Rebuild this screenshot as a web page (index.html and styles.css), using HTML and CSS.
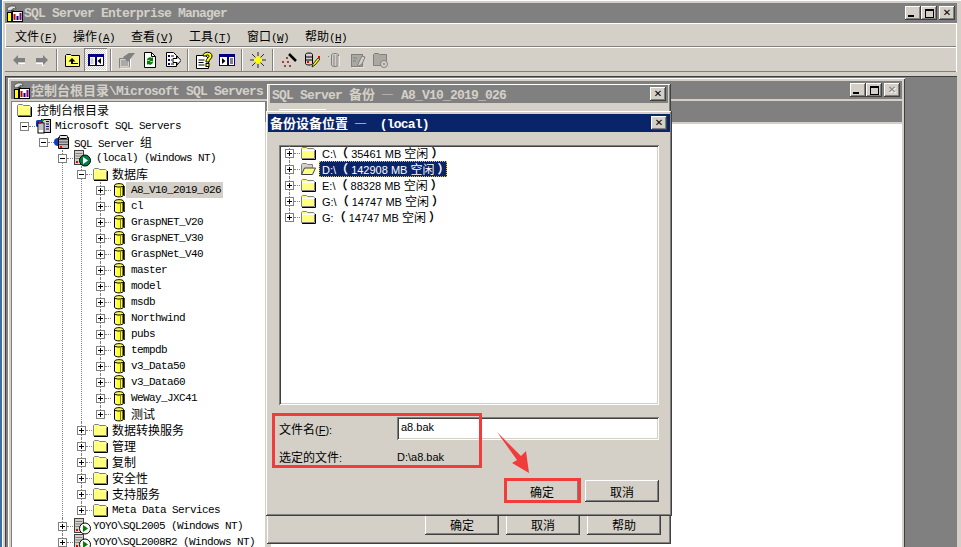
FILE: index.html
```html
<!DOCTYPE html>
<html lang="zh-CN">
<head>
<meta charset="utf-8">
<title>SQL Server Enterprise Manager</title>
<link rel="stylesheet" href="styles.css">
</head>
<body>
<svg class="defs" aria-hidden="true">
  <defs>
    <symbol id="folder" viewBox="0 0 16 16"><path d="M1.500 13.500V3.500l1-1h4l1 1h6l1 1v9z" fill="#ffff80" stroke="#808080"/><path d="M2 5.500h12.500" stroke="#fff"/><path d="M2 14.500h13.500V5" fill="none" stroke="#000"/></symbol>
    <symbol id="folderopen" viewBox="0 0 16 16"><path d="M1.500 13.500V3.500l1-1h4l1 1h5v3" fill="#d4d0c8" stroke="#808080"/><path d="M1.500 13.500l3-6.500h11l-3 6.500z" fill="#ffff80" stroke="#404040"/></symbol>
    <symbol id="db" viewBox="0 0 16 16"><path d="M3.500 3.500c0-2.500 9-2.500 9 0v9.500c0 2.500-9 2.500-9 0z" fill="#ffff33" stroke="#000"/><path d="M5 5.500v8" stroke="#ffffc0"/><path d="M9.500 5.500v9M11.500 5v9" stroke="#808000"/><path d="M3.500 3.500c0 2 9 2 9 0" fill="none" stroke="#000"/><path d="M13.500 4v10" stroke="#404040"/></symbol>
    <symbol id="servers" viewBox="0 0 16 16"><rect x="6.500" y="1.500" width="9" height="13" fill="#d4d0c8" stroke="#000"/><rect x="1" y="2" width="7" height="7" rx="1.500" fill="#0a3fc0"/><rect x="3" y="5" width="6" height="10" fill="#fff" stroke="#000"/><path d="M4 7h4M4 9h4M4 11h4" stroke="#808080"/><rect x="4" y="4" width="2" height="2" fill="#f00"/><rect x="7" y="1" width="2" height="2" fill="#0a0"/><path d="M11 3.500h3M11 6h3M11 8.500h3M11 11h3" stroke="#000080"/></symbol>
    <symbol id="group" viewBox="0 0 16 16"><circle cx="4" cy="8" r="4" fill="#0a3fc0"/><path d="M4.500 3.500h10v11h-10z" fill="#b8b8b8" stroke="#000"/><path d="M5 5.500h9M5 8h9M5 10.500h9" stroke="#505050"/><rect x="5.500" y="1.500" width="8" height="3" rx="1" fill="#e8e8e8" stroke="#000"/><rect x="6" y="12" width="2" height="2" fill="#f00"/></symbol>
    <symbol id="server" viewBox="0 0 18 18"><rect x="1.500" y="1.500" width="9" height="14" fill="#d4d0c8" stroke="#404040"/><path d="M2.500 4.500h7M2.500 7h7M2.500 9.500h7" stroke="#808080"/><rect x="3" y="12" width="2" height="2" fill="#e00"/><circle cx="12" cy="11.500" r="5.500" fill="#008040" stroke="#000"/><path d="M10 8v7l5-3.500z" fill="#fff"/></symbol>
    <symbol id="serverwhite" viewBox="0 0 18 18"><rect x="1.500" y="1.500" width="9" height="14" fill="#d4d0c8" stroke="#404040"/><path d="M2.500 4.500h7M2.500 7h7M2.500 9.500h7" stroke="#808080"/><rect x="3" y="12" width="2" height="2" fill="#e00"/><circle cx="12" cy="11.500" r="5.500" fill="#fff" stroke="#000"/><path d="M10 8v7l5-3.500z" fill="#008000"/></symbol>
    <symbol id="app" viewBox="0 0 17 17"><path d="M1 3l4-2h4l1 3-3-.5L6 5 2 6z" fill="#e0e0e0" stroke="#404040" stroke-width=".7"/><path d="M5 5h3v3H5z" fill="#404040"/><rect x="1.500" y="7.500" width="4" height="9" fill="#ffff00" stroke="#000"/><rect x="6.500" y="6.500" width="10" height="10" fill="#fff" stroke="#000"/><path d="M8.500 15V9" stroke="#c00" stroke-width="2"/><path d="M11.500 15v-4" stroke="#000080" stroke-width="2"/><path d="M14.500 15v-7" stroke="#800080" stroke-width="2"/></symbol>
    <symbol id="arrowl" viewBox="0 0 16 16"><path d="M2 8l5-5v3h7v4H7v3z" fill="#808080"/><path d="M7 13h1v-2h6v1H8v2z" fill="#fff"/></symbol>
    <symbol id="arrowr" viewBox="0 0 16 16"><path d="M14 8L9 3v3H2v4h7v3z" fill="#808080"/><path d="M2 11h7v2l1 1-2 0v-2H2z" fill="#fff"/></symbol>
    <symbol id="up" viewBox="0 0 16 16"><path d="M.5 14.500V3.500l1-1h4l1 1h8v11z" fill="#ffff66" stroke="#000"/><path d="M7 6L3.500 9.500H6V12h7v-1H8V9.500h2.500z" fill="#000"/></symbol>
    <symbol id="panel" viewBox="0 0 16 16"><rect x=".5" y="2.500" width="15" height="11" fill="#fff" stroke="#000080"/><rect x="1" y="3" width="14" height="2" fill="#000080"/><path d="M7.500 3v10M8.500 3v10" stroke="#000080"/><path d="M1.500 13V5" stroke="#000080"/><path d="M13 6v6L9.500 9z" fill="#000"/><path d="M2.500 7h3M2.500 9h3M2.500 11h3" stroke="#a0a0a0"/></symbol>
    <symbol id="panel2" viewBox="0 0 16 16"><rect x=".5" y="2.500" width="15" height="11" fill="#fff" stroke="#000080"/><rect x="1" y="3" width="14" height="2" fill="#000080"/><path d="M8.500 3v10M9.500 3v10" stroke="#000080"/><path d="M3 6v6l3.500-3z" fill="#000"/><path d="M11 7h3M11 9h3M11 11h3" stroke="#000"/></symbol>
    <symbol id="propsoff" viewBox="0 0 18 18"><path d="M1.500 7.500h10v9h-10z" fill="#d4d0c8" stroke="#808080"/><path d="M3 10h7M3 12h7M3 14h7" stroke="#808080"/><path d="M5 6l6-4h6l-4 5-3 4-2-2z" fill="#808080"/><path d="M12.500 8v8M2 17h11" stroke="#fff"/></symbol>
    <symbol id="refresh" viewBox="0 0 16 16"><path d="M2.500 .5h7l4 4v11h-11z" fill="#fff" stroke="#000"/><path d="M9.500 .5v4h4" fill="none" stroke="#000"/><path d="M5 8a3 3 0 015-2l1-1v4H7l1-1a1.500 1.500 0 00-2 1zM11 10a3 3 0 01-5 2l-1 1V9h4l-1 1a1.500 1.500 0 002-1z" fill="#008000"/></symbol>
    <symbol id="export" viewBox="0 0 16 16"><path d="M1.500 .5h7l3 3v11h-10z" fill="#fff" stroke="#000"/><path d="M3 3h2v2H3zM3 7h2v2H3zM3 11h2v2H3z" fill="#000080"/><path d="M6 4h3M6 8h1M6 12h3" stroke="#000"/><path d="M8 6.500h4V4l4 4.500L12 13v-2.500H8z" fill="#fff" stroke="#000"/></symbol>
    <symbol id="help" viewBox="0 0 18 18"><path d="M1.500 4.500h9l3 3v10h-12z" fill="#fff" stroke="#000"/><path d="M3.500 9h6M3.500 11.500h5M3.500 14h6" stroke="#000"/><path d="M8 5c0-5 9-5 9 0 0 3-3 3-3 6h-3c0-4 3-4 3-6 0-1.500-3-1.500-3 0z" fill="#ffff00" stroke="#000"/><rect x="11" y="12.500" width="3" height="3" fill="#ffff00" stroke="#000"/></symbol>
    <symbol id="star" viewBox="0 0 16 16"><path d="M8 0v16M0 8h16M2 2l12 12M14 2L2 14" stroke="#000" stroke-width=".8"/><path d="M8 4v8M4 8h8M5.500 5.500l5 5M10.500 5.500l-5 5" stroke="#ffff00" stroke-width="1.800"/></symbol>
    <symbol id="wand" viewBox="0 0 16 16"><path d="M8 2l7 7" stroke="#000" stroke-width="2.500"/><path d="M5 5h2v2H5zM1 9h2v2H1zM6 9h2v2H6zM3 13h2v2H3zM8 13h2v2H8z" fill="#a04040"/></symbol>
    <symbol id="dbpen" viewBox="0 0 16 16"><path d="M1.500 2.500c0-2 7-2 7 0v9c0 2-7 2-7 0z" fill="#d4d0c8" stroke="#000"/><path d="M2 5h6M2 8h6" stroke="#000"/><rect x="3" y="9" width="2" height="2" fill="#f00"/><path d="M8 15l1-3 5-6 2 1-5 6z" fill="#ffff00" stroke="#000" stroke-width=".8"/><path d="M14 4h2v2h-2z" fill="#f00"/></symbol>
    <symbol id="off1" viewBox="0 0 16 16"><path d="M4.500 3c0-2 7-2 7 0v10c0 2-7 2-7 0z" fill="#d4d0c8" stroke="#808080"/><path d="M7 3v11M10 3v11" stroke="#808080"/><path d="M12 4v10" stroke="#fff"/><rect x="1" y="4" width="1" height="1" fill="#808080"/></symbol>
    <symbol id="off2" viewBox="0 0 16 16"><rect x="1.500" y="2.500" width="11" height="12" fill="#aaa8a0" stroke="#808080"/><path d="M7 15l2-5 3-6 3 1-3 7z" fill="#d4d0c8" stroke="#808080"/><path d="M3 6h4M3 9h3" stroke="#808080"/><path d="M2 16h12" stroke="#fff"/></symbol>
    <symbol id="off3" viewBox="0 0 16 16"><path d="M.5 13.500V2.500l1-1h4l1 1h7v11z" fill="#aaa8a0" stroke="#808080"/><circle cx="11" cy="12" r="3.500" fill="#d4d0c8" stroke="#808080"/><circle cx="11" cy="12" r="1" fill="#808080"/></symbol>
    <symbol id="plus" viewBox="0 0 9 9"><rect x=".5" y=".5" width="8" height="8" fill="#fff" stroke="#808080"/><path d="M2 4.500h5M4.500 2v5" stroke="#000"/></symbol>
    <symbol id="minus" viewBox="0 0 9 9"><rect x=".5" y=".5" width="8" height="8" fill="#fff" stroke="#808080"/><path d="M2 4.500h5" stroke="#000"/></symbol>
  </defs>
</svg>

<div class="app">
  <header class="titlebar">
    <svg class="ic-app"><use href="#app"/></svg>
    <span class="title-text">SQL Server Enterprise Manager</span>
    <span class="caps">
      <button class="cap"><span class="g-min"></span></button><button class="cap cap-max"><span class="g-max"></span></button><button class="cap cap-close">✕</button>
    </span>
  </header>
  <nav class="menubar">
    <span class="menu">文件<span class="m">(<u>F</u>)</span></span>
    <span class="menu">操作<span class="m">(<u>A</u>)</span></span>
    <span class="menu">查看<span class="m">(<u>V</u>)</span></span>
    <span class="menu">工具<span class="m">(<u>T</u>)</span></span>
    <span class="menu">窗口<span class="m">(<u>W</u>)</span></span>
    <span class="menu">帮助<span class="m">(<u>H</u>)</span></span>
  </nav>
  <div class="toolbar">
    <span class="tb"><svg class="i16"><use href="#arrowl"/></svg></span>
    <span class="tb"><svg class="i16"><use href="#arrowr"/></svg></span>
    <span class="sep"></span>
    <span class="tb"><svg class="i16"><use href="#up"/></svg></span>
    <span class="tb tb-on"><svg class="i16"><use href="#panel"/></svg></span>
    <span class="sep"></span>
    <span class="tb"><svg class="i18"><use href="#propsoff"/></svg></span>
    <span class="tb"><svg class="i16"><use href="#refresh"/></svg></span>
    <span class="tb"><svg class="i16"><use href="#export"/></svg></span>
    <span class="sep"></span>
    <span class="tb"><svg class="i18"><use href="#help"/></svg></span>
    <span class="tb"><svg class="i16"><use href="#panel2"/></svg></span>
    <span class="sep"></span>
    <span class="tb"><svg class="i16"><use href="#star"/></svg></span>
    <span class="sep"></span>
    <span class="tb"><svg class="i16"><use href="#wand"/></svg></span>
    <span class="tb"><svg class="i16"><use href="#dbpen"/></svg></span>
    <span class="tb"><svg class="i16"><use href="#off1"/></svg></span>
    <span class="tb"><svg class="i16"><use href="#off2"/></svg></span>
    <span class="tb"><svg class="i16"><use href="#off3"/></svg></span>
  </div>

  <main class="mdi">
    <section class="child">
      <header class="child-title">
        <svg class="ic-app"><use href="#app"/></svg>
        <span class="title-text tt-cj"><span class="cj">控制台根目录</span>\Microsoft SQL Servers</span>
        <span class="caps">
          <button class="cap"><span class="g-min"></span></button><button class="cap cap-max"><span class="g-max"></span></button><button class="cap cap-close cap-off">✕</button>
        </span>
      </header>
      <div class="child-body">
        <div class="tree-pane">
          <div class="row root-row"><svg class="i16"><use href="#folder"/></svg><span class="label cj12">控制台根目录</span></div>
          <ul class="tree top">
            <li><div class="row"><svg class="box"><use href="#minus"/></svg><i class="conn"></i><svg class="i16"><use href="#servers"/></svg><span class="label">Microsoft SQL Servers</span></div>
              <ul class="tree top">
                <li><div class="row"><svg class="box"><use href="#minus"/></svg><i class="conn"></i><svg class="i16"><use href="#group"/></svg><span class="label">SQL Server <span class="cj12">组</span></span></div>
                  <ul class="tree">
                    <li><div class="row"><svg class="box"><use href="#minus"/></svg><i class="conn"></i><svg class="i18"><use href="#server"/></svg><span class="label lab-srv">(local) (Windows NT)</span></div>
                      <ul class="tree">
                        <li><div class="row"><svg class="box"><use href="#minus"/></svg><i class="conn"></i><svg class="i16"><use href="#folder"/></svg><span class="label cj12">数据库</span></div>
                          <ul class="tree">
                            <li><div class="row"><svg class="box"><use href="#plus"/></svg><i class="conn"></i><svg class="i16"><use href="#db"/></svg><span class="label sel-gray">A8_V10_2019_026</span></div></li>
                            <li><div class="row"><svg class="box"><use href="#plus"/></svg><i class="conn"></i><svg class="i16"><use href="#db"/></svg><span class="label">cl</span></div></li>
                            <li><div class="row"><svg class="box"><use href="#plus"/></svg><i class="conn"></i><svg class="i16"><use href="#db"/></svg><span class="label">GraspNET_V20</span></div></li>
                            <li><div class="row"><svg class="box"><use href="#plus"/></svg><i class="conn"></i><svg class="i16"><use href="#db"/></svg><span class="label">GraspNET_V30</span></div></li>
                            <li><div class="row"><svg class="box"><use href="#plus"/></svg><i class="conn"></i><svg class="i16"><use href="#db"/></svg><span class="label">GraspNet_V40</span></div></li>
                            <li><div class="row"><svg class="box"><use href="#plus"/></svg><i class="conn"></i><svg class="i16"><use href="#db"/></svg><span class="label">master</span></div></li>
                            <li><div class="row"><svg class="box"><use href="#plus"/></svg><i class="conn"></i><svg class="i16"><use href="#db"/></svg><span class="label">model</span></div></li>
                            <li><div class="row"><svg class="box"><use href="#plus"/></svg><i class="conn"></i><svg class="i16"><use href="#db"/></svg><span class="label">msdb</span></div></li>
                            <li><div class="row"><svg class="box"><use href="#plus"/></svg><i class="conn"></i><svg class="i16"><use href="#db"/></svg><span class="label">Northwind</span></div></li>
                            <li><div class="row"><svg class="box"><use href="#plus"/></svg><i class="conn"></i><svg class="i16"><use href="#db"/></svg><span class="label">pubs</span></div></li>
                            <li><div class="row"><svg class="box"><use href="#plus"/></svg><i class="conn"></i><svg class="i16"><use href="#db"/></svg><span class="label">tempdb</span></div></li>
                            <li><div class="row"><svg class="box"><use href="#plus"/></svg><i class="conn"></i><svg class="i16"><use href="#db"/></svg><span class="label">v3_Data50</span></div></li>
                            <li><div class="row"><svg class="box"><use href="#plus"/></svg><i class="conn"></i><svg class="i16"><use href="#db"/></svg><span class="label">v3_Data60</span></div></li>
                            <li><div class="row"><svg class="box"><use href="#plus"/></svg><i class="conn"></i><svg class="i16"><use href="#db"/></svg><span class="label">WeWay_JXC41</span></div></li>
                            <li><div class="row"><svg class="box"><use href="#plus"/></svg><i class="conn"></i><svg class="i16"><use href="#db"/></svg><span class="label cj12">测试</span></div></li>
                          </ul>
                        </li>
                        <li><div class="row"><svg class="box"><use href="#plus"/></svg><i class="conn"></i><svg class="i16"><use href="#folder"/></svg><span class="label cj12">数据转换服务</span></div></li>
                        <li><div class="row"><svg class="box"><use href="#plus"/></svg><i class="conn"></i><svg class="i16"><use href="#folder"/></svg><span class="label cj12">管理</span></div></li>
                        <li><div class="row"><svg class="box"><use href="#plus"/></svg><i class="conn"></i><svg class="i16"><use href="#folder"/></svg><span class="label cj12">复制</span></div></li>
                        <li><div class="row"><svg class="box"><use href="#plus"/></svg><i class="conn"></i><svg class="i16"><use href="#folder"/></svg><span class="label cj12">安全性</span></div></li>
                        <li><div class="row"><svg class="box"><use href="#plus"/></svg><i class="conn"></i><svg class="i16"><use href="#folder"/></svg><span class="label cj12">支持服务</span></div></li>
                        <li><div class="row"><svg class="box"><use href="#plus"/></svg><i class="conn"></i><svg class="i16"><use href="#folder"/></svg><span class="label">Meta Data Services</span></div></li>
                      </ul>
                    </li>
                    <li><div class="row"><svg class="box"><use href="#plus"/></svg><i class="conn"></i><svg class="i18"><use href="#serverwhite"/></svg><span class="label lab-yoyo">YOYO\SQL2005 (Windows NT)</span></div></li>
                    <li><div class="row"><svg class="box"><use href="#plus"/></svg><i class="conn"></i><svg class="i18"><use href="#serverwhite"/></svg><span class="label lab-yoyo">YOYO\SQL2008R2 (Windows NT)</span></div></li>
                  </ul>
                </li>
              </ul>
            </li>
          </ul>
        </div>
        <div class="right-pane">
          <div class="right-band"></div>
          <div class="right-white"></div>
        </div>
      </div>
    </section>

    <section class="dlg dlg-back">
      <header class="dlg-title dlg-title-off">
        <span class="title-text tt-cj">SQL Server <span class="cj">备份  —</span> A8_V10_2019_026</span>
        <button class="cap cap-close">✕</button>
      </header>
      <div class="tabline"></div>
      <div class="back-buttons">
        <button class="btn">确定</button>
        <button class="btn">取消</button>
        <button class="btn">帮助</button>
      </div>
    </section>

    <section class="dlg dlg-front">
      <header class="dlg-title">
        <span class="title-text tt-cj"><span class="cj">备份设备位置  —  </span> (local)</span>
        <button class="cap cap-close">✕</button>
      </header>
      <div class="drive-box">
        <ul class="tree drive-tree">
          <li><div class="row"><svg class="box"><use href="#plus"/></svg><i class="conn"></i><svg class="i16"><use href="#folder"/></svg><span class="drive">C:\<span class="paren">（</span> 35461 MB <span class="zh">空闲</span> <span class="paren">）</span></span></div></li>
          <li><div class="row"><svg class="box"><use href="#plus"/></svg><i class="conn"></i><svg class="i16"><use href="#folderopen"/></svg><span class="drive drive-sel">D:\<span class="paren">（</span> 142908 MB <span class="zh">空闲</span> <span class="paren">）</span></span></div></li>
          <li><div class="row"><svg class="box"><use href="#plus"/></svg><i class="conn"></i><svg class="i16"><use href="#folder"/></svg><span class="drive">E:\<span class="paren">（</span> 88328 MB <span class="zh">空闲</span> <span class="paren">）</span></span></div></li>
          <li><div class="row"><svg class="box"><use href="#plus"/></svg><i class="conn"></i><svg class="i16"><use href="#folder"/></svg><span class="drive">G:\<span class="paren">（</span> 14747 MB <span class="zh">空闲</span> <span class="paren">）</span></span></div></li>
          <li><div class="row"><svg class="box"><use href="#plus"/></svg><i class="conn"></i><svg class="i16"><use href="#folder"/></svg><span class="drive">G:<span class="paren">（</span> 14747 MB <span class="zh">空闲</span> <span class="paren">）</span></span></div></li>
        </ul>
      </div>
      <div class="field">
        <label class="field-label">文件名<span class="lat">(<u>F</u>):</span></label>
        <div class="input">a8.bak</div>
      </div>
      <div class="field field-static">
        <span class="field-label">选定的文件<span class="lat">:</span></span>
        <span class="field-value">D:\a8.bak</span>
      </div>
      <div class="front-buttons">
        <button class="btn">确定</button>
        <button class="btn">取消</button>
      </div>
      <div class="mark mark-fields"></div>
      <div class="mark mark-ok"></div>
      <svg class="mark-arrow" viewBox="0 0 40 45"><polygon points="0,0 24,24 29,19 32,41 15,31 20,28" fill="#f23c3c"/></svg>
    </section>
  </main>
</div>
</body>
</html>
```

FILE: styles.css
```css
* { box-sizing: border-box; }
html, body { margin: 0; height: 547px; overflow: hidden; }
body { background: #3a6ea5; padding-left: 2px; font: 12px "Noto Sans CJK SC", "Liberation Sans", sans-serif; color: #000; }
.defs { position: absolute; left: 0; top: 0; width: 0; height: 0; }
ul { list-style: none; margin: 0; padding: 0; }
button { font: inherit; margin: 0; padding: 0; border: 0; color: #000; }
svg { flex: none; display: block; }
.i16 { width: 16px; height: 16px; }
.i18 { width: 18px; height: 18px; }
.ic-app { width: 17px; height: 17px; flex: none; }

.app {
  position: relative;
  height: 547px;
  background: #d4d0c8;
  padding: 3px 4px 0 3px;
  box-shadow: inset 1px 1px #fff;
  display: flex;
  flex-direction: column;
}

/* caption bars */
.titlebar, .child-title, .dlg-title { display: flex; align-items: center; background: #808080; color: #d4d0c8; }
.titlebar { height: 20px; padding: 0 2px 0 1px; flex: none; }
.title-text { font: bold 13px "Liberation Mono", monospace; letter-spacing: -.8px; white-space: pre; margin-left: 1px; }
.tt-cj { margin-top: -2px; }
.cj { font: bold 13px "Noto Sans CJK SC", sans-serif; letter-spacing: 0; }
.caps { margin-left: auto; display: flex; }
.cap {
  width: 16px; height: 14px; background: #d4d0c8;
  box-shadow: inset -1px -1px #404040, inset 1px 1px #fff, inset -2px -2px #808080;
  display: flex; align-items: center; justify-content: center;
  font: bold 10px "DejaVu Sans", sans-serif; line-height: 14px;
  position: relative;
}
.cap-max { margin-right: 2px; }
.cap-off { color: #808080; text-shadow: 1px 1px #fff; }
.g-min { display: block; width: 6px; height: 2px; background: #000; margin: 6px 4px 0 0; }
.g-max { display: block; width: 9px; height: 9px; border: 1px solid #000; border-top-width: 2px; }

/* menu + toolbar */
.menubar {
  flex: none; height: 24px; display: flex; align-items: center;
  padding-left: 2px;
  box-shadow: inset 1px 1px #fff, inset -1px 0 #fff, inset 0 -1px #808080;
}
.menu { width: 58px; padding-left: 8px; white-space: nowrap; }
.m { font: 11px "Liberation Mono", monospace; letter-spacing: -.6px; }
.toolbar {
  flex: none; height: 25px; display: flex; align-items: center;
  padding-left: 2px;
  box-shadow: inset 0 1px #fff, inset -1px 0 #fff, inset 0 -1px #808080;
}
.tb { width: 23px; height: 23px; display: flex; align-items: center; justify-content: center; }
.tb-on {
  background: repeating-conic-gradient(#fff 0 25%, #d4d0c8 0 50%) 0 0 / 2px 2px;
  box-shadow: inset 1px 1px #808080, inset -1px -1px #fff;
}
.sep { width: 8px; height: 22px; background: linear-gradient(#808080, #808080) 3px 0 / 1px 100% no-repeat, linear-gradient(#fff, #fff) 4px 0 / 1px 100% no-repeat; }

/* MDI canvas */
.mdi { position: relative; flex: 1; min-height: 0; margin-top: 4px; background: #808080; overflow: hidden; box-shadow: inset 1px 1px #404040; }

.child {
  position: absolute; left: 3px; top: 2px; width: 897px; height: 480px;
  background: #d4d0c8; padding: 3px;
  box-shadow: inset 1px 1px #fff, inset -1px 0 #404040;
  display: flex; flex-direction: column;
}
.child-title { height: 18px; flex: none; padding: 0 2px 0 2px; }
.child-body { flex: 1; display: flex; padding-top: 2px; min-height: 0; }
.tree-pane { width: 254px; flex: none; background: #fff; padding: 1px 0 0 9px; box-shadow: inset 1px 1px #808080; overflow: hidden; }
.right-pane { flex: 1; display: flex; flex-direction: column; margin-top: -1px; }
.right-band { height: 24px; flex: none; background: #808080; border-top: 1px solid #d4d0c8; border-bottom: 2px solid #d4d0c8; }
.right-white { flex: 1; background: #fff; margin-left: 6px; }

/* tree */
.tree .tree { margin-left: 19px; }
.tree li { position: relative; }
.tree li::before { content: ""; position: absolute; left: 4px; top: 0; bottom: 0; border-left: 1px dotted #808080; }
.tree li:last-child::before { bottom: auto; height: 8px; }
.tree.top > li::before { display: none; }
.row { height: 16px; display: flex; align-items: center; position: relative; white-space: nowrap; }
.root-row { margin-left: -4px; }
.root-row .label { padding-left: 5px; }
.box { width: 9px; height: 9px; position: relative; z-index: 1; }
.conn { width: 6px; height: 0; border-top: 1px dotted #808080; flex: none; }
.label { font: 11px/17px "Liberation Mono", monospace; letter-spacing: -.6px; padding: 0 2px 0 4px; height: 16px; white-space: pre; }
.cj12 { font: 12px/16px "Noto Sans CJK SC", sans-serif; letter-spacing: 0; }
.lab-srv { padding-left: 5px; }
.lab-yoyo { padding-left: 2px; }
.sel-gray { background: #d4d0c8; margin-left: -1px; padding-left: 5px; }

/* dialogs */
.dlg { position: absolute; background: #d4d0c8; box-shadow: inset -1px -1px #404040, inset 1px 1px #fff, inset -2px -2px #808080; }
.dlg-back { left: 262px; top: 8px; width: 404px; height: 460px; padding: 1px 3px; display: flex; flex-direction: column; }
.dlg-title { height: 18px; flex: none; padding: 0 2px 0 1px; }
.dlg-title .cap { margin-left: auto; }
.dlg-title-off { background: #808080; }
.tabline { width: 47px; height: 1px; background: #fff; margin: 6px 0 0 9px; }
.back-buttons { margin-top: auto; display: flex; gap: 7px; justify-content: flex-end; padding: 0 7px 8px 0; }
.btn { width: 74px; height: 21px; background: #d4d0c8; box-shadow: inset -1px -1px #404040, inset 1px 1px #fff, inset -2px -2px #808080; font: 12px "Noto Sans CJK SC", sans-serif; }
.dlg-front { left: 261px; top: 35px; width: 406px; height: 405px; padding: 3px 2px; display: flex; flex-direction: column; }
.dlg-front .dlg-title { background: #0a246a; color: #fff; padding-right: 3px; }
.drive-box { margin: 13px 11px 0; height: 260px; flex: none; background: #fff; padding-left: 6px; box-shadow: inset 1px 1px #808080, inset -1px -1px #fff, inset 2px 2px #404040, inset -2px -2px #d4d0c8; }
.drive { font: 11px/16px "Liberation Sans", "Noto Sans CJK SC", sans-serif; padding: 0 2px; margin-left: 4px; height: 16px; white-space: pre; }
.drive-sel { background: #0a246a; color: #fff; outline: 1px dotted #d4c060; outline-offset: -1px; margin-left: 3px; padding-left: 3px; }
.paren { font: bold 12px/16px "Noto Sans CJK SC", sans-serif; }
.paren:last-child { margin-right: -5px; }
.zh { font: 12px/16px "Noto Sans CJK SC", sans-serif; }
.field { display: flex; align-items: center; margin: 12px 0 0 11px; height: 23px; flex: none; }
.field-static { margin-top: 5px; }
.field-label { width: 118px; flex: none; font-size: 12px; }
.lat { font: 11px "Liberation Sans", sans-serif; }
.input { width: 262px; height: 23px; background: #fff; padding: 2px 0 0 4px; font: 11px/16px "Liberation Sans", sans-serif; box-shadow: inset 1px 1px #808080, inset -1px -1px #fff, inset 2px 2px #404040, inset -2px -2px #d4d0c8; }
.field-value { font: 11px "Liberation Sans", sans-serif; }
.front-buttons { display: flex; justify-content: flex-end; gap: 6px; margin-top: auto; padding: 0 11px 11px 0; }
.front-buttons .btn { width: 74px; height: 22px; }
.mark { position: absolute; border: 3px solid #f23c3c; pointer-events: none; }
.mark-fields { left: 6px; top: 302px; width: 210px; height: 55px; }
.mark-ok { left: 238px; top: 367px; width: 77px; height: 25px; }
.mark-arrow { position: absolute; left: 231px; top: 321px; width: 40px; height: 45px; }
```
